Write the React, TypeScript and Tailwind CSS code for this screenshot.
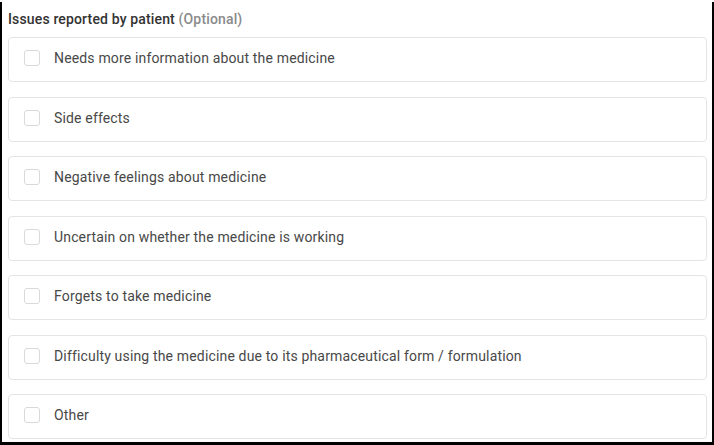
const issues = [
  'Needs more information about the medicine',
  'Side effects',
  'Negative feelings about medicine',
  'Uncertain on whether the medicine is working',
  'Forgets to take medicine',
  'Difficulty using the medicine due to its pharmaceutical form / formulation',
  'Other',
];

export default function App() {
  return (
    <div className="w-[714px] h-[445px] bg-black">
      <div
        className="ml-[2px] mt-[2px] w-[710px] h-[440px] bg-white px-[6px] pt-[7px] overflow-hidden"
        style={{ fontFamily: 'Roboto, "Liberation Sans", sans-serif' }}
      >
        <div className="text-[14px] leading-[20px] font-medium tracking-[0.15px] text-[#333] mb-[8px]">
          Issues reported by patient{' '}
          <span className="text-[#8a8a8a]">(Optional)</span>
        </div>

        <div className="flex flex-col gap-[14.5px] w-[699px]">
          {issues.map((item) => (
            <label
              key={item}
              className="h-[45px] flex items-center pb-[3px] pl-[15px] border border-[#e4e4e4] rounded-[4px] bg-white"
            >
              <span className="w-[16px] h-[16px] rounded-[3px] border border-[#d9d9d9] bg-white shrink-0" />
              <span className="ml-[14px] text-[14px] leading-[20px] tracking-[0.16px] text-[#484848]">
                {item}
              </span>
            </label>
          ))}
        </div>
      </div>
    </div>
  );
}
